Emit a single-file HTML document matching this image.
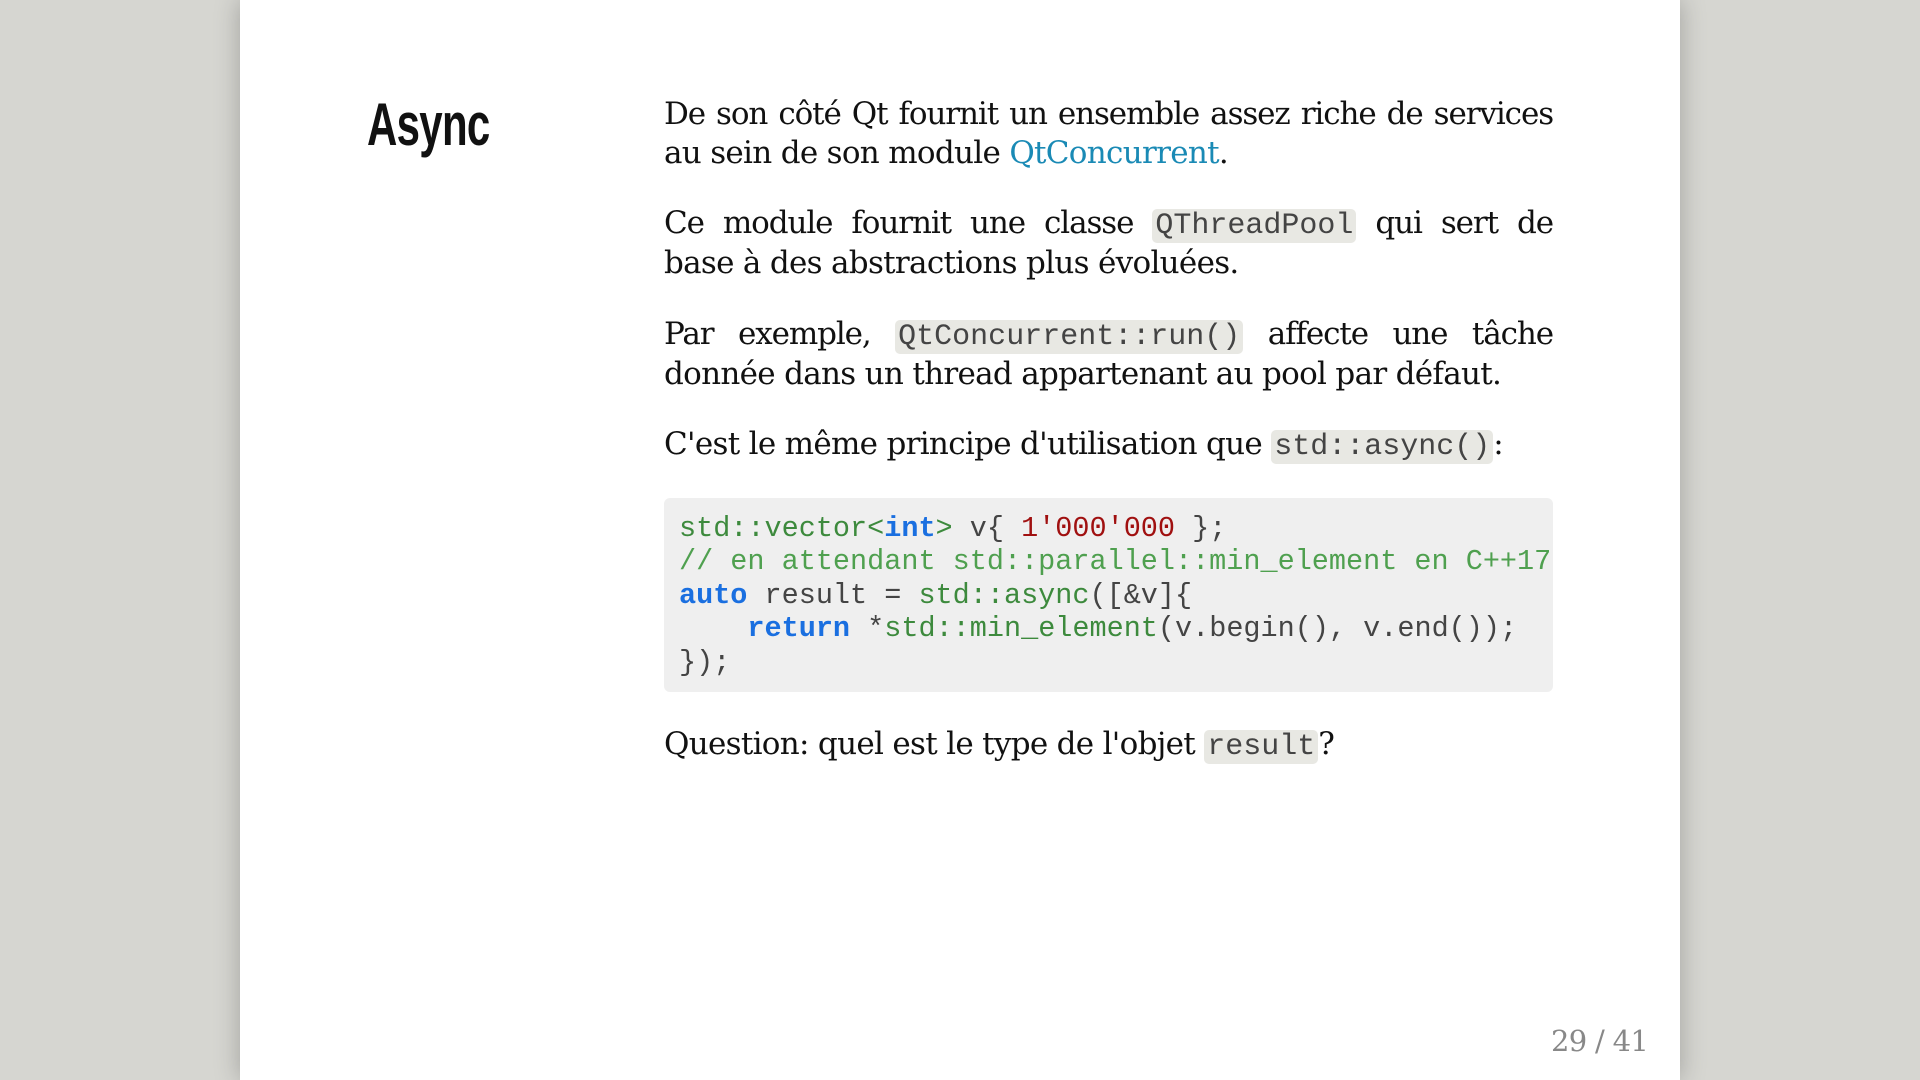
<!DOCTYPE html>
<html><head><meta charset="utf-8"><style>
html,body{margin:0;padding:0;width:1920px;height:1080px;overflow:hidden;background:#d6d6d1;}
.page{position:absolute;left:240px;top:0;width:1440px;height:1080px;background:#fff;box-shadow:0 0 24px rgba(0,0,0,0.25);}
.t{position:absolute;font-family:"DejaVu Serif",serif;font-size:31px;line-height:40px;color:#111;white-space:nowrap;letter-spacing:-0.7px;}
.j{width:889px;text-align:justify;text-align-last:justify;white-space:normal;letter-spacing:-1.1px;}
.l{left:664px;}
code,.c{font-family:"Liberation Mono",monospace;}
code{background:#e8e8e3;border-radius:5px;padding:0 3px;font-size:30px;color:#444;letter-spacing:0;}
.code{position:absolute;left:664px;top:498px;width:889px;height:194px;background:#efefef;border-radius:6px;overflow:hidden;}
.cl{position:absolute;left:15px;font-family:"Liberation Mono",monospace;font-size:28.5px;line-height:34px;color:#444;white-space:pre;}
.k{color:#1a6fe0;font-weight:bold}.n{color:#a01010}.g{color:#3d8a3d}.cm{color:#4fa04f}
</style></head><body>
<div class="page"></div>
<div style="position:absolute;left:367px;top:90px;font-family:'Liberation Sans',sans-serif;font-weight:bold;font-size:60px;line-height:70px;color:#111;transform:scaleX(0.7);transform-origin:left top;letter-spacing:-1px;">Async</div>

<div class="t l j" style="top:94px">De son côté Qt fournit un ensemble assez riche de services</div>
<div class="t l" style="top:133px">au sein de son module <span style="color:#1a8ab5">QtConcurrent</span>.</div>

<div class="t l j" style="top:203px">Ce module fournit une classe <code>QThreadPool</code> qui sert de</div>
<div class="t l" style="top:243px">base à des abstractions plus évoluées.</div>

<div class="t l j" style="top:314px">Par exemple, <code>QtConcurrent::run()</code> affecte une tâche</div>
<div class="t l" style="top:354px">donnée dans un thread appartenant au pool par défaut.</div>

<div class="t l" style="top:424px">C'est le même principe d'utilisation que <code>std::async()</code>:</div>

<div class="code">
<div class="cl" style="top:14px"><span class="g">std::vector&lt;</span><span class="k">int</span><span class="g">&gt;</span> v{ <span class="n">1'000'000</span> };</div>
<div class="cl cm" style="top:47px">// en attendant std::parallel::min_element en C++17</div>
<div class="cl" style="top:81px"><span class="k">auto</span> result = <span class="g">std::async</span>([&amp;v]{</div>
<div class="cl" style="top:114px">    <span class="k">return</span> *<span class="g">std::min_element</span>(v.begin(), v.end());</div>
<div class="cl" style="top:148px">});</div>
</div>

<div class="t l" style="top:724px">Question: quel est le type de l'objet <code>result</code>?</div>

<div class="t" style="left:1551px;top:1021px;color:#888;font-size:29px;">29 / 41</div>
</body></html>
